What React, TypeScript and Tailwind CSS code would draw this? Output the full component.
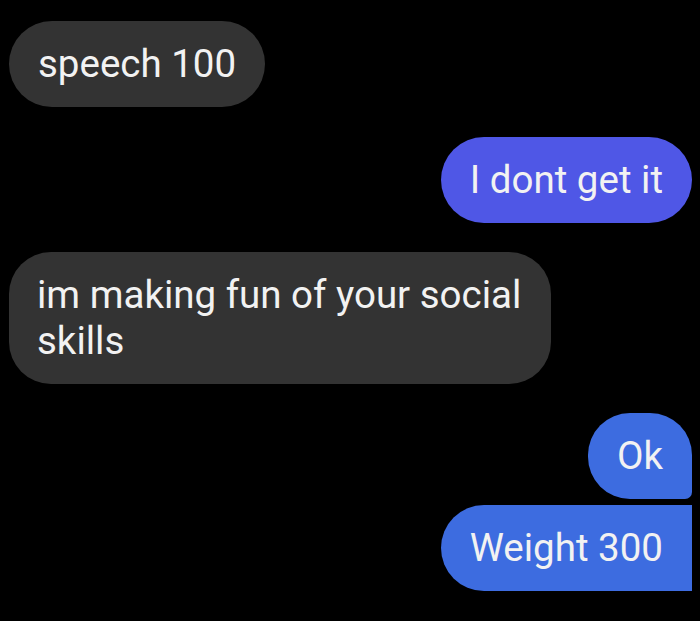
export default function App() {
  return (
    <div
      className="flex h-[621px] w-[700px] flex-col bg-black pl-[9px] pr-[8px] pt-[21px] text-[38.5px] leading-[46px] text-[#f2f2f2]"
      style={{ fontFamily: "Roboto, 'Liberation Sans', sans-serif" }}
    >
      <div className="self-start rounded-full bg-[#333333] px-[29px] py-[20px]">
        speech 100
      </div>

      <div className="mt-[30px] self-end rounded-full bg-[#4f57e6] px-[29px] py-[20px]">
        I dont get it
      </div>

      <div className="mt-[29px] max-w-[542px] self-start rounded-[42px] bg-[#333333] px-[28px] py-[20px]">
        im making fun of your social skills
      </div>

      <div className="mt-[29px] self-end rounded-[42px] rounded-br-[7px] bg-[#3d6ce0] px-[29px] py-[20px]">
        Ok
      </div>

      <div className="mt-[6px] self-end rounded-l-full rounded-tr-[7px] rounded-br-[28px] bg-[#3d6ce0] px-[29px] py-[20px]">
        Weight 300
      </div>
    </div>
  );
}
